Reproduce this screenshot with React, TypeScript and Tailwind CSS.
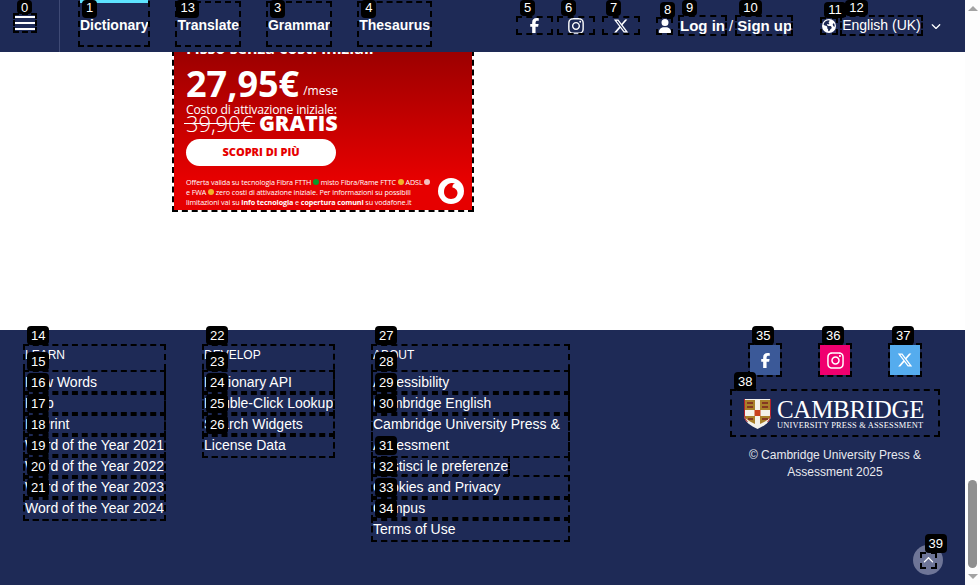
import React from 'react'
import { FaFacebookF, FaInstagram, FaXTwitter, FaUser, FaEarthAmericas, FaChevronDown, FaChevronUp } from 'react-icons/fa6'

const dashed = 'outline-2 outline-dashed outline-black'

const Badge = ({ n, className = 'h-[19px] leading-[19px] -top-5 left-0.5' }: { n: number; className?: string }) => (
  <span className={`absolute z-10 rounded-sm bg-black px-1 text-[13px] font-normal text-white ${className}`}>
    {n}
  </span>
)

const NavItem = ({ n, label, bar, badge }: { n: number; label: string; bar?: boolean; badge?: string }) => (
  <div className={`relative flex h-[42px] items-center whitespace-nowrap pt-0.5 text-[14px] font-bold text-white ${dashed}`}>
    {bar && <div className="absolute -top-[3px] left-0 h-[3px] w-full bg-[#5ee3ff]" />}
    <Badge n={n} className={`h-[18px] leading-[16px] -top-[3px] ${badge ?? 'left-0.5'}`} />
    {label}
  </div>
)

const SocialTop = ({ n, children, w }: { n: number; children: React.ReactNode; w: string }) => (
  <div className={`relative flex h-[15px] items-center justify-center text-white ${dashed} ${w}`}>
    <Badge n={n} className="h-4 leading-4 -top-[18px] left-0.5" />
    {children}
  </div>
)

const FootRow = ({ n, label }: { n?: number; label: string }) => (
  <div className={`relative text-[14px] leading-[21px] text-white ${dashed}`}>
    {n !== undefined && <Badge n={n} />}
    {label}
  </div>
)

const FootTitle = ({ label }: { label: string }) => (
  <div className="h-[26px] pt-[2px] text-[12px] leading-[14px] text-white">{label}</div>
)

const Shield = () => (
  <svg width="27" height="30" viewBox="0 0 27 30" className="mt-0.5">
    <path d="M0 0H27V16C27 23 20 27 13.5 30C7 27 0 23 0 16Z" fill="#f4f1ea" />
    <path d="M1 1H11V11H1ZM16 1H26V11H16ZM1 17H11V25L6 22.5L1 19ZM16 17H26V19L21 22.5L16 25Z" fill="#a9802a" />
    <path d="M0 0H1V16C1 19 2 21 4 23L3 23C1 21 0 19 0 16ZM27 0H26V16C26 19 25 21 23 23L24 23C26 21 27 19 27 16Z" fill="#b3202c" />
    <rect x="10.5" y="11" width="6" height="6" fill="#c8401e" />
    <path d="M3 4H9M18 4H24M3 8H9M18 8H24M4 20H9M18 20H24" stroke="#7a1f1f" strokeWidth="1.5" />
  </svg>
)

const Dot = ({ color }: { color: string }) => <span className={`inline-block size-1.5 rounded-full ${color}`} />

const Ad = () => (
  <div className={`relative ml-[174px] h-[158px] w-[298px] overflow-hidden bg-gradient-to-b from-[#9c0000] to-[#e60000] to-80% font-['Open_Sans',sans-serif] text-white ${dashed}`}>
    <div className="-mt-[18px] flex flex-col pl-3">
      <div className="h-[31px] pt-[3px] text-[16px] font-bold leading-[22px]">Fisso senza costi iniziali</div>
      <div className="flex h-[38px] items-end gap-1">
        <span className="text-[36px] font-bold leading-[38px]">27,95€</span>
        <span className="pb-1 text-[12px] leading-[16px]">/mese</span>
      </div>
      <div className="-mt-px text-[12.2px] leading-[16px] tracking-[-0.2px]">Costo di attivazione iniziale:</div>
      <div className="-mt-[5px] flex h-[20px] items-center gap-[6px]">
        <span className="relative text-[22px] font-light leading-[20px] tracking-[-0.1px]">
          39,90€
          <span className="absolute -left-0.5 -right-0.5 top-[10px] h-px bg-white" />
        </span>
        <span className="text-[21.5px] font-extrabold leading-[20px]">GRATIS</span>
      </div>
      <div className="mt-1.5 flex h-[27px] w-[150px] items-center justify-center rounded-full bg-white text-[11px] font-extrabold text-[#e60000]">
        SCOPRI DI PIÙ
      </div>
      <div className="mt-[11px] whitespace-nowrap text-[7.2px] leading-[10px] tracking-[-0.1px]">
        Offerta valida su tecnologia Fibra FTTH <Dot color="bg-[#0a9a2a]" /> misto Fibra/Rame FTTC <Dot color="bg-[#f0b429]" /> ADSL <Dot color="bg-[#f3c0c0]" />
        <br />
        e FWA <Dot color="bg-[#f0b429]" /> zero costi di attivazione iniziale. Per informazioni su possibili
        <br />
        limitazioni vai su <b>info tecnologia</b> e <b>copertura comuni</b> su vodafone.it
      </div>
    </div>
    <svg className="absolute bottom-[6px] right-[8px]" width="26" height="26" viewBox="0 0 26 26">
      <circle cx="13" cy="13" r="13" fill="#fff" />
      <path d="M13.5 5C10 5.5 6 8.5 6 14C6 18 9 21 13 21C17 21 19.5 18 19.5 15C19.5 11.5 16.5 10 14.5 9.5C14.2 7.5 15 6 17 5.5C15.8 5 14.6 4.8 13.5 5Z" fill="#e60000" />
    </svg>
  </div>
)

const App = () => {
  return (
    <div className="flex h-[585px] w-[980px] overflow-hidden bg-white font-['Liberation_Sans',sans-serif]">
      <div className="flex w-[965px] flex-col">
        <header className="relative z-20 flex h-[52px] items-start bg-[#1e2a56]">
          <div className="flex h-[52px] w-[60px] shrink-0 border-r border-[#3f4a75] pl-[15px] pt-[15px]">
            <div className={`relative flex h-4 w-5 flex-col justify-center gap-1 ${dashed}`}>
              <Badge n={0} className="h-[14px] leading-4 -top-[15px] left-[2px]" />
              <div className="h-0.5 bg-white" />
              <div className="h-0.5 bg-white" />
              <div className="h-0.5 bg-white" />
            </div>
          </div>
          <nav className="ml-5 mt-[3px] flex gap-[29px]">
            <NavItem n={1} label="Dictionary" bar />
            <NavItem n={13} label="Translate" badge="-left-px" />
            <NavItem n={3} label="Grammar" />
            <NavItem n={4} label="Thesaurus" />
          </nav>
          <div className="ml-[88px] mt-[18px] flex items-center">
            <SocialTop n={5} w="w-[33px]"><FaFacebookF className="size-[15px]" /></SocialTop>
            <div className="ml-2">
              <SocialTop n={6} w="w-[34px]"><FaInstagram className="size-[18px]" /></SocialTop>
            </div>
            <div className="ml-[11px]">
              <SocialTop n={7} w="w-[34px]"><FaXTwitter className="size-4" /></SocialTop>
            </div>
          </div>
          <div className="ml-5 mt-[17px] flex h-[17px] items-center whitespace-nowrap leading-[17px] text-white">
            <div className={`relative w-[13px] ${dashed}`}>
              <Badge n={8} className="h-4 leading-4 -top-[17px] left-0.5" />
              <FaUser className="size-[14px]" />
            </div>
            <div className={`relative ml-[9px] w-[45px] text-[15px] font-bold leading-[17px] ${dashed}`}>
              <Badge n={9} className="h-4 leading-4 -top-[17px] left-0.5" />
              Log in
            </div>
            <span className="mx-1 text-[15px] leading-[17px]">/</span>
            <div className={`relative w-[54px] text-[15px] font-bold leading-[17px] ${dashed}`}>
              <Badge n={10} className="h-4 leading-4 -top-[17px] left-0.5" />
              Sign up
            </div>
          </div>
          <div className="ml-[31px] mt-[17px] flex h-[17px] items-center whitespace-nowrap text-white">
            <div className={`relative ${dashed}`}>
              <Badge n={11} className="h-4 leading-4 -top-[17px] left-0.5" />
              <FaEarthAmericas className="size-[14px]" />
            </div>
            <div className={`relative ml-[6px] text-[14px] leading-[17px] ${dashed}`}>
              <Badge n={12} className="h-4 leading-4 -top-[17px] left-[3px]" />
              English (UK)
            </div>
            <FaChevronDown className="ml-[10px] size-[10px]" />
          </div>
        </header>

        <main className="h-[278px]">
          <Ad />
        </main>

        <footer className="relative flex h-[255px] items-start whitespace-nowrap bg-[#1e2a56] pl-[25px] pt-4">
          <div className={`relative w-[139px] ${dashed}`}>
            <Badge n={14} />
            <FootTitle label="LEARN" />
            <FootRow n={15} label="New Words" />
            <FootRow n={16} label="Help" />
            <FootRow n={17} label="In Print" />
            <FootRow n={18} label="Word of the Year 2021" />
            <FootRow n={19} label="Word of the Year 2022" />
            <FootRow n={20} label="Word of the Year 2023" />
            <FootRow n={21} label="Word of the Year 2024" />
          </div>
          <div className={`relative ml-10 w-[129px] ${dashed}`}>
            <Badge n={22} />
            <FootTitle label="DEVELOP" />
            <FootRow n={23} label="Dictionary API" />
            <FootRow n={24} label="Double-Click Lookup" />
            <FootRow n={25} label="Search Widgets" />
            <FootRow n={26} label="License Data" />
          </div>
          <div className={`relative ml-10 w-[195px] ${dashed}`}>
            <Badge n={27} />
            <FootTitle label="ABOUT" />
            <FootRow n={28} label="Accessibility" />
            <FootRow n={29} label="Cambridge English" />
            <div className={`relative whitespace-normal text-[14px] leading-[21px] text-white ${dashed}`}>
              <Badge n={30} />
              Cambridge University Press &amp; Assessment
            </div>
            <div className="relative text-[14px] leading-[21px] text-white">
              <Badge n={31} />
              <span className={dashed}>Gestisci le preferenze</span>
            </div>
            <FootRow n={32} label="Cookies and Privacy" />
            <FootRow n={33} label="Campus" />
            <FootRow n={34} label="Terms of Use" />
          </div>

          <div className="ml-auto mr-[27px] flex w-[206px] flex-col items-center">
            <div className="-mt-px flex gap-10 text-white">
              <div className={`relative flex size-[30px] items-center justify-center bg-[#3b5998] ${dashed}`}>
                <Badge n={35} className="h-[19px] leading-[19px] -top-[19px] left-0.5" />
                <FaFacebookF className="size-[15px]" />
              </div>
              <div className={`relative flex size-[30px] items-center justify-center bg-[#f0006f] ${dashed}`}>
                <Badge n={36} className="h-[19px] leading-[19px] -top-[19px] left-0.5" />
                <FaInstagram className="size-[19px]" />
              </div>
              <div className={`relative flex size-[30px] items-center justify-center bg-[#55acee] ${dashed}`}>
                <Badge n={37} className="h-[19px] leading-[19px] -top-[19px] left-0.5" />
                <FaXTwitter className="size-4" />
              </div>
            </div>
            <div className={`relative mt-[16px] flex h-[44px] w-[206px] items-center gap-[6px] pl-3 text-white ${dashed}`}>
              <Badge n={38} className="h-[19px] leading-[19px] -top-[19px] left-0.5" />
              <Shield />
              <div className="flex flex-col pt-[3px] font-['Liberation_Serif',serif]">
                <span className="text-[25px] leading-[22px] tracking-[-0.3px]">CAMBRIDGE</span>
                <span className="text-[8.4px] leading-[10px] tracking-[0.2px]">UNIVERSITY PRESS &amp; ASSESSMENT</span>
              </div>
            </div>
            <p className="mt-[12px] whitespace-normal text-center text-[12px] leading-[17px] text-[#e8e9ee]">
              © Cambridge University Press &amp; Assessment 2025
            </p>
          </div>

          <div className="absolute bottom-[10px] right-[22px] flex size-[30px] items-center justify-center rounded-full bg-[#6e7597]">
            <div className={`relative flex size-[13px] items-center justify-center text-white ${dashed}`}>
              <Badge n={39} className="h-[19px] leading-[19px] -top-[20px] left-[3px]" />
              <FaChevronUp className="size-[11px]" />
            </div>
          </div>
        </footer>
      </div>

      <div className="flex w-[15px] flex-col items-center bg-[#fdfdfd] py-[6px]">
        <div className="size-0 border-x-[5px] border-b-[5px] border-x-transparent border-b-[#a3a3a3]" />
        <div className="flex w-full flex-1 flex-col justify-end pb-[6px]">
          <div className="mx-auto h-[88px] w-[9px] rounded-full bg-[#8f8f8f]" />
        </div>
        <div className="size-0 border-x-[5px] border-t-[5px] border-x-transparent border-t-[#a3a3a3]" />
      </div>
    </div>
  )
}

export default App
